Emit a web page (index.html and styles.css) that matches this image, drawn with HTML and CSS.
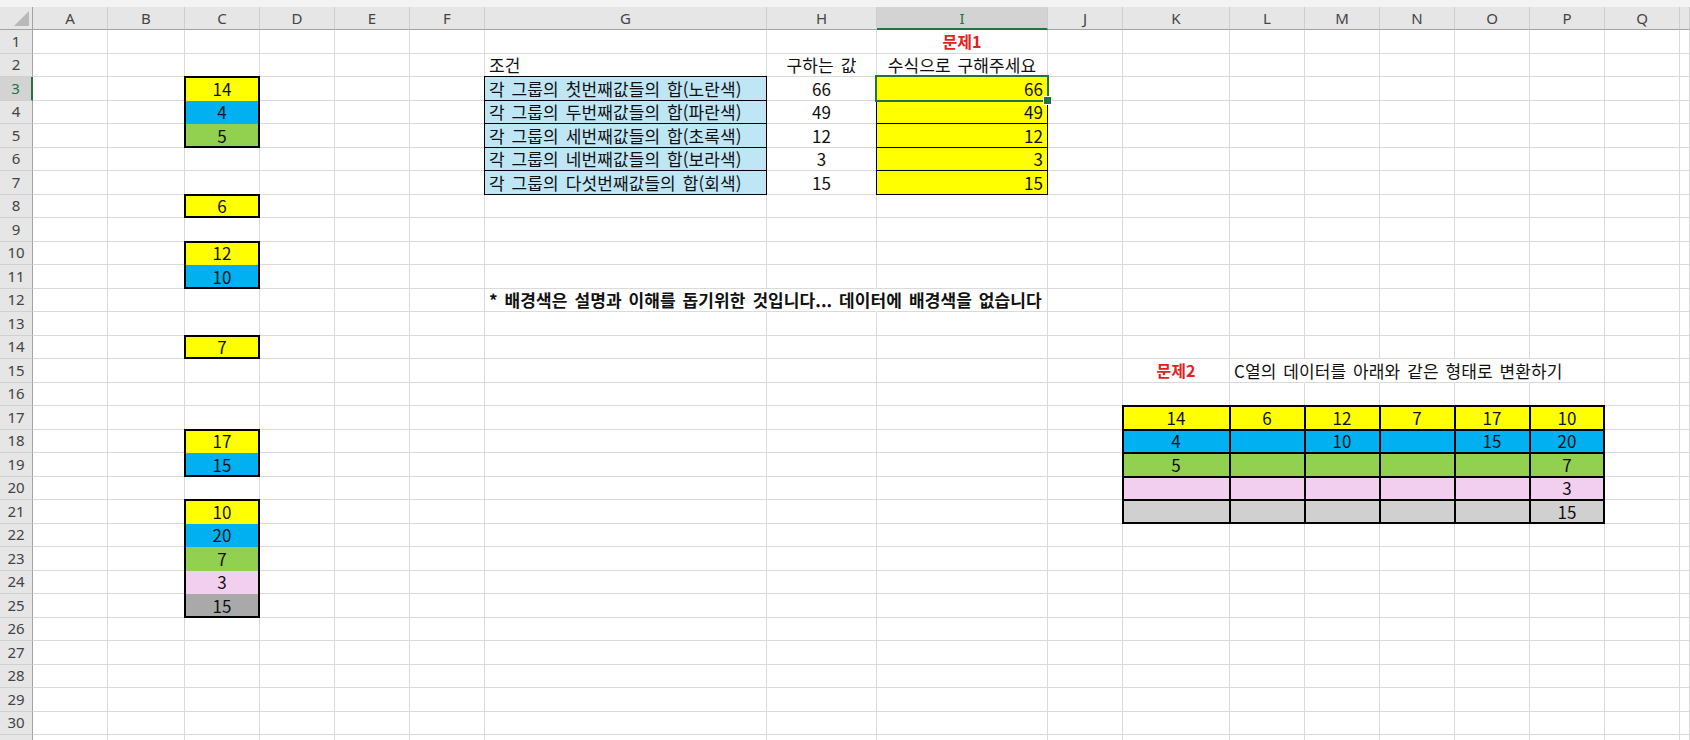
FILE: index.html
```html
<!DOCTYPE html>
<html lang="ko">
<head>
<meta charset="utf-8">
<title>Sheet1</title>
<link rel="stylesheet" href="styles.css">
</head>
<body>
<div class="topbar"></div>
<div class="sheet" id="sheet"></div>
<script src="script.js"></script>
</body>
</html>
```

FILE: styles.css
```css
* { box-sizing: border-box; }
html, body { margin: 0; padding: 0; }
body {
  width: 1690px;
  height: 740px;
  overflow: hidden;
  background: #fff;
  font-family: "Noto Sans CJK KR", "Noto Sans", sans-serif;
  color: #111;
}

.topbar { height: 7px; background: #f3f3f3; }

.sheet {
  display: grid;
  grid-template-columns: 33px 75px 77px 75px 75px 75px 75px 282px 110px 171px 75px 107px 75px 75px 75px 75px 75px 75px 10px;
  grid-template-rows: 23px repeat(31, 23.5px);
}

/* headers */
.corner, .ch, .rh {
  background: #e6e6e6;
  color: #444;
  font-family: "Noto Sans", "Noto Sans CJK KR", sans-serif;
  font-size: 15px;
  display: flex;
  align-items: center;
  justify-content: center;
  line-height: 1;
}
.corner {
  position: relative;
  border-right: 1px solid #a3a3a3;
  border-bottom: 1px solid #a3a3a3;
}
.corner::before {
  content: "";
  position: absolute;
  right: 3px;
  bottom: 3px;
  width: 15px;
  height: 15px;
  background: #b9b9b9;
  clip-path: polygon(100% 0, 100% 100%, 0 100%);
}
.ch {
  border-right: 1px solid #cdcdcd;
  border-bottom: 1px solid #a3a3a3;
  padding-top: 1px;
}
.rh {
  border-right: 1px solid #a3a3a3;
  border-bottom: 1px solid #d0d0d0;
}
.ch.active {
  background: #d3d3d3;
  color: #217346;
  border-bottom: 2px solid #217346;
}
.rh.active {
  background: #d3d3d3;
  color: #217346;
  border-right: 2px solid #217346;
}

/* cells */
.cell {
  position: relative;
  border-right: 1px solid #dadada;
  border-bottom: 1px solid #dadada;
  padding: 0 4px;
  display: flex;
  align-items: center;
  white-space: nowrap;
  font-size: 17px;
  line-height: 1;
  letter-spacing: 0.1px;
  word-spacing: 2px;
}
.ctr { justify-content: center; }
.rgt { justify-content: flex-end; }
.bold { font-weight: 700; }
.title { font-weight: 700; color: #e3211f; font-size: 16px; letter-spacing: 0; }

/* text running on into the empty cells to its right */
.spill { z-index: 2; overflow: visible; }
.open { border-right-color: transparent; }

/* fills hide the grid lines under them */
.fill { border-right-color: transparent; border-bottom-color: transparent; }
.f-y { background: #ffff00; }
.f-b { background: #00b0f0; }
.f-g { background: #92d050; }
.f-p { background: #f2cfee; }
.f-gd { background: #a9a9a9; }
.f-gl { background: #d0d0d0; }
.f-lb { background: #bfe6f5; }

/* cell borders drawn over the grid lines */
.box::after {
  content: "";
  position: absolute;
  inset: -1px;
  border: 0 solid #000;
  pointer-events: none;
}
.thin::after { border-width: 1px; }
.thick.t::after { border-top-width: 2px; }
.thick.b::after { border-bottom-width: 2px; }
.thick.l::after { border-left-width: 2px; }
.thick.r::after { border-right-width: 2px; }

/* active cell */
.sel {
  position: absolute;
  inset: -2px;
  border: 2px solid #217346;
  z-index: 3;
  pointer-events: none;
}
.sel::after {
  content: "";
  position: absolute;
  right: -5px;
  bottom: -5px;
  width: 7px;
  height: 7px;
  background: #217346;
  border: 1px solid #fff;
}
```

FILE: script.js
```js
// Builds the worksheet: corner, column letters, then each row with its cells.
const COLS = ['A','B','C','D','E','F','G','H','I','J','K','L','M','N','O','P','Q','R'];
const ROWS = 30;          // numbered rows in view
const LAST_COL = 'R';     // only a sliver of this column is in view
const ACTIVE = { col: 'I', row: 3 };

const cells = {};

function put(ref, v, cls) { cells[ref] = { v: v, cls: cls || '' }; }

// a run of filled cells in one column, framed by a thick outline
function group(col, startRow, items) {
  items.forEach(function (item, i) {
    const sides = ['l', 'r'];
    if (i === 0) sides.push('t');
    if (i === items.length - 1) sides.push('b');
    put(col + (startRow + i), item[1], 'ctr fill f-' + item[0] + ' box thick ' + sides.join(' '));
  });
}

// 문제1
put('I1', '문제1', 'title ctr');
put('G2', '조건');
put('H2', '구하는 값', 'ctr');
put('I2', '수식으로 구해주세요', 'ctr');
[
  ['각 그룹의 첫번째값들의 합(노란색)', '66'],
  ['각 그룹의 두번째값들의 합(파란색)', '49'],
  ['각 그룹의 세번째값들의 합(초록색)', '12'],
  ['각 그룹의 네번째값들의 합(보라색)', '3'],
  ['각 그룹의 다섯번째값들의 합(회색)', '15']
].forEach(function (r, i) {
  const row = 3 + i;
  put('G' + row, r[0], 'fill f-lb box thin');
  put('H' + row, r[1], 'ctr');
  put('I' + row, r[1], 'rgt fill f-y box thin');
});

put('G12', '* 배경색은 설명과 이해를 돕기위한 것입니다... 데이터에 배경색을 없습니다', 'bold spill open');
put('H12', '', 'open');

// source data in column C
group('C', 3, [['y', '14'], ['b', '4'], ['g', '5']]);
group('C', 8, [['y', '6']]);
group('C', 10, [['y', '12'], ['b', '10']]);
group('C', 14, [['y', '7']]);
group('C', 18, [['y', '17'], ['b', '15']]);
group('C', 21, [['y', '10'], ['b', '20'], ['g', '7'], ['p', '3'], ['gd', '15']]);

// 문제2
put('K15', '문제2', 'title ctr');
put('L15', 'C열의 데이터를 아래와 같은 형태로 변환하기', 'spill open');
put('M15', '', 'open');
put('N15', '', 'open');
put('O15', '', 'open');

const table = [
  ['y',  ['14', '6', '12', '7', '17', '10']],
  ['b',  ['4', '', '10', '', '15', '20']],
  ['g',  ['5', '', '', '', '', '7']],
  ['p',  ['', '', '', '', '', '3']],
  ['gl', ['', '', '', '', '', '15']]
];
const tcols = ['K', 'L', 'M', 'N', 'O', 'P'];
table.forEach(function (r, ri) {
  r[1].forEach(function (v, ci) {
    const sides = ['t', 'l'];
    if (ci === tcols.length - 1) sides.push('r');
    if (ri === table.length - 1) sides.push('b');
    put(tcols[ci] + (17 + ri), v, 'ctr fill f-' + r[0] + ' box thick ' + sides.join(' '));
  });
});

function el(cls, text) {
  const d = document.createElement('div');
  d.className = cls;
  if (text) d.textContent = text;
  return d;
}

const sheet = document.getElementById('sheet');
sheet.appendChild(el('corner'));
COLS.forEach(function (c) {
  sheet.appendChild(el('ch' + (c === ACTIVE.col ? ' active' : ''), c === LAST_COL ? '' : c));
});
// the last row is only a sliver at the window's bottom edge, so it carries no number
for (let r = 1; r <= ROWS + 1; r++) {
  sheet.appendChild(el('rh' + (r === ACTIVE.row ? ' active' : ''), r <= ROWS ? String(r) : ''));
  COLS.forEach(function (c) {
    const data = cells[c + r];
    const cell = el('cell ' + (data ? data.cls : ''), data ? data.v : '');
    if (c === ACTIVE.col && r === ACTIVE.row) cell.appendChild(el('sel'));
    sheet.appendChild(cell);
  });
}
```
